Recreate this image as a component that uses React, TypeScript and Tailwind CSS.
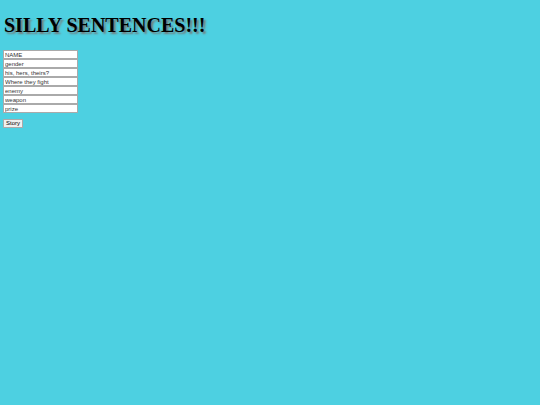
import React from 'react';

const fields = ['NAME', 'gender', 'his, hers, theirs?', 'Where they fight', 'enemy', 'weapon', 'prize'];

export default function App() {
  return (
    <div className="min-h-[405px] w-full bg-[#4dd0e1] px-[3px] pt-[13px] font-['Liberation_Sans',sans-serif]">
      <h1 className="ml-[1px] font-['Liberation_Serif',serif] text-[20px] font-bold leading-[24px] text-black [text-shadow:2px_2px_2px_#777]">
        SILLY SENTENCES!!!
      </h1>
      <div className="mt-[13px] flex flex-col">
        {fields.map((f) => (
          <input
            key={f}
            placeholder={f}
            className="h-[9px] w-[75px] border border-[#aaa] bg-white px-[1px] text-[6px] leading-[7px] text-black outline-none placeholder:text-[#333]"
          />
        ))}
      </div>
      <button className="mt-[6px] block h-[9px] w-[20px] border border-[#aaa] bg-[#f0f0f0] text-[6px] leading-[7px] text-black">
        Story
      </button>
    </div>
  );
}
